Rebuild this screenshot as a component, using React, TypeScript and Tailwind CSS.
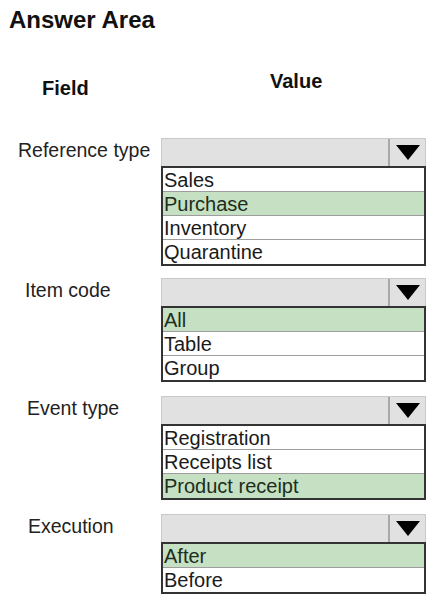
const groups = [
  {
    label: "Reference type",
    labelPad: "pl-[18px]",
    gap: "mt-[38px]",
    options: ["Sales", "Purchase", "Inventory", "Quarantine"],
    selected: 1,
  },
  {
    label: "Item code",
    labelPad: "pl-[25px]",
    gap: "mt-[12px]",
    options: ["All", "Table", "Group"],
    selected: 0,
  },
  {
    label: "Event type",
    labelPad: "pl-[27px]",
    gap: "mt-[14px]",
    options: ["Registration", "Receipts list", "Product receipt"],
    selected: 2,
  },
  {
    label: "Execution",
    labelPad: "pl-[28px]",
    gap: "mt-[14px]",
    options: ["After", "Before"],
    selected: 0,
  },
];

const Dropdown = ({ options, selected }: { options: string[]; selected: number }) => (
  <div className="w-[265px]">
    {/* closed select box */}
    <div className="flex h-[28px] border border-b-0 border-[#c9c9c9] bg-[#e1e1e1]">
      <div className="flex-1" />
      <div className="flex w-[37px] items-center justify-center border-l-2 border-[#a9a9a9]">
        <svg width="24" height="15" viewBox="0 0 24 15">
          <polygon points="0,0 24,0 12,15" fill="#000" />
        </svg>
      </div>
    </div>
    {/* options list */}
    <div className="border-2 border-[#333] bg-white divide-y divide-[#9d9d9d]">
      {options.map((opt, i) => (
        <div
          key={opt}
          className={`flex h-[24px] items-center pl-[1px] text-[20px] leading-none ${
            i === selected ? "bg-[#c5e0c3] text-[#1c2e1c]" : "text-[#1a1a1a]"
          }`}
        >
          {opt}
        </div>
      ))}
    </div>
  </div>
);

const App = () => {
  return (
    <div
      className="min-h-[605px] w-[438px] bg-white pt-[4px]"
      style={{ fontFamily: '"Liberation Sans", Arial, sans-serif' }}
    >
      <h1 className="pl-[9px] text-[24px] font-bold leading-[32px] text-[#111]">Answer Area</h1>

      <div className="mt-[33px] flex items-start text-[20px] font-bold leading-[24px] text-[#111]">
        <div className="mt-[7px] w-[270px] pl-[42px]">Field</div>
        <div>Value</div>
      </div>

      {groups.map((g) => (
        <div key={g.label} className={`flex items-start ${g.gap}`}>
          <div className={`flex h-[26px] w-[161px] items-center ${g.labelPad} text-[19.5px] text-[#222]`}>
            {g.label}
          </div>
          <Dropdown options={g.options} selected={g.selected} />
        </div>
      ))}
    </div>
  );
};

export default App;
